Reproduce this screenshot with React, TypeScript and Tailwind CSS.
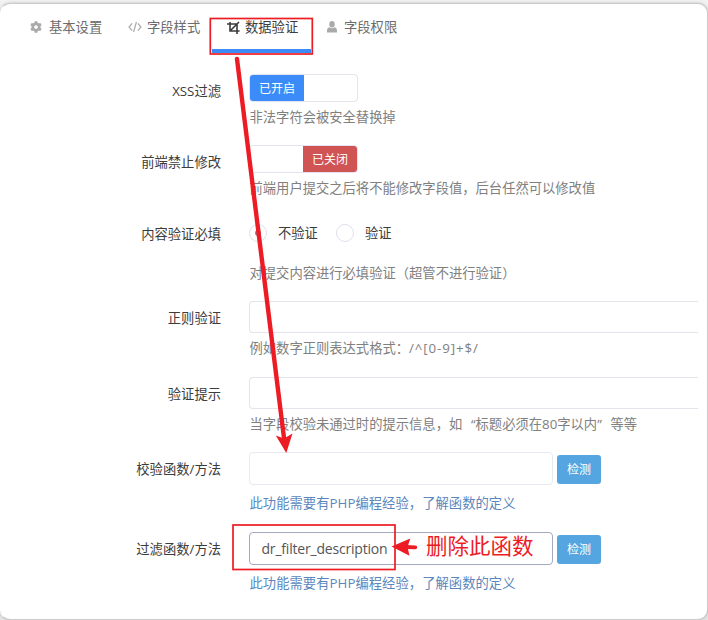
import React from 'react';
import clsx from 'clsx';
import { FaCog } from 'react-icons/fa';

const tabs = [
  { label: '基本设置', icon: <FaCog className="w-3 h-3" />, className: 'w-[98px]' },
  {
    label: '字段样式',
    className: 'w-[99px]',
    icon: (
      <svg viewBox="0 0 14 12" className="w-[14px] h-3" fill="none" stroke="currentColor" strokeWidth="1.2">
        <path d="M4.2 2.4L1 6l3.2 3.6M9.8 2.4L13 6 9.8 9.6M8.4 1L5.6 11" />
      </svg>
    ),
  },
  {
    label: '数据验证',
    className: 'w-[99px]',
    icon: (
      <svg viewBox="0 0 13 13" className="w-[13px] h-[13px]" fill="none" stroke="currentColor" strokeWidth="1.6">
        <path d="M3 1v9h9.6M0 3h10v10M3.5 9.5L12 1" />
      </svg>
    ),
  },
  {
    label: '字段权限',
    className: 'w-[80px]',
    icon: (
      <svg viewBox="0 0 10 12" className="w-[10px] h-3" fill="currentColor">
        <ellipse cx="5" cy="3.2" rx="2.7" ry="3.2" />
        <path d="M2.6 6.2C3.9 7.6 6.1 7.6 7.4 6.2C9.3 6.6 10 8 10 9.8V11.5H0V9.8C0 8 .7 6.6 2.6 6.2z" />
      </svg>
    ),
  },
];

interface RowProps {
  label: string;
  className: string;
  labelClass?: string;
  children: React.ReactNode;
}

const Row: React.FC<RowProps> = ({ label, className, labelClass = 'h-[34px]', children }) => (
  <div className={clsx('flex', className)}>
    <div className={clsx('w-[221px] mr-7 shrink-0 flex items-center justify-end text-[#3c3c3c] whitespace-nowrap', labelClass)}>
      {label}
    </div>
    <div className="flex-1 min-w-0">{children}</div>
  </div>
);

const Help = ({ children, className = 'mt-[5px] text-[#808080]' }: { children: React.ReactNode; className?: string }) => (
  <div className={clsx('h-5 leading-5 pl-[0.5px] whitespace-nowrap', className)}>{children}</div>
);

const Toggle = ({ on }: { on: boolean }) => (
  <div className="flex w-[109px] h-[28px] rounded border border-[#e3e4ee] overflow-hidden text-xs text-white">
    {on && <span className="w-[54px] pt-px flex items-center justify-center bg-[#3b8cf8]">已开启</span>}
    {!on && <span className="w-[54px] pt-px ml-auto flex items-center justify-center bg-[#d05454]">已关闭</span>}
  </div>
);

const Radio = ({ label, checked }: { label: string; checked?: boolean }) => (
  <label className="flex items-center gap-[11px] text-[#3c3c3c]">
    <span className="w-[18px] h-[18px] rounded-full border border-[#e1e0ee] flex items-center justify-center">
      {checked && <span className="w-[6px] h-[6px] rounded-full bg-[#8a86a0]" />}
    </span>
    {label}
  </label>
);

const CheckedInput = ({ value, className = 'border-[#e9eaf1]' }: { value?: string; className?: string }) => (
  <>
    <div className="flex items-start gap-1">
      <div className={clsx('w-[304px] h-[33px] rounded border px-[11.5px] flex items-center text-[14px] tracking-[-0.2px] text-[#555]', className)}>
        {value}
      </div>
      <button className="w-11 h-[29px] mt-[3px] pt-px rounded-[3px] bg-[#55a5e0] text-white text-xs">检测</button>
    </div>
    <Help className="mt-2 text-[#5a87bd] tracking-[0.04px]">此功能需要有PHP编程经验，了解函数的定义</Help>
  </>
);

const App: React.FC = () => {
  return (
    <div className="w-[708px] h-[620px] pt-[3px] bg-gradient-to-b from-[#f2f2f2] to-[#e4e4e4] overflow-hidden">
      <div className="relative w-[708px] h-[617px] bg-white border border-[#ccc] border-l-transparent rounded-[10px] shadow-[0_0_3px_#bbb] font-['Open_Sans','Noto_Sans_CJK_SC',sans-serif] text-[13.3px] leading-5">

        {/* Tabs */}
        <nav className="flex h-[49px] pl-[29px] text-[#6c6c6c]">
          {tabs.map((tab, i) => (
            <div
              key={tab.label}
              className={clsx(
                'flex items-start pt-[13px] whitespace-nowrap',
                tab.className,
                i === 2 ? 'ml-[-15px] mr-4 pl-[15px] border-b-4 border-[#3b8cf8] text-[#3c3c3c]' : ''
              )}
            >
              <span className={clsx('h-5 flex items-center', i !== 2 && 'text-[#aaa]', i === 0 || i === 3 ? 'mr-[7px]' : 'mr-[5px]')}>
                {tab.icon}
              </span>
              {tab.label}
            </div>
          ))}
        </nav>

        {/* Form rows */}
        <form className="pt-[21px] pr-[9px] overflow-hidden -ml-px">
          <Row label="XSS过滤" className="h-[71px]">
            <Toggle on />
            <Help>非法字符会被安全替换掉</Help>
          </Row>

          <Row label="前端禁止修改" className="h-[79px]">
            <Toggle on={false} />
            <Help>前端用户提交之后将不能修改字段值，后台任然可以修改值</Help>
          </Row>

          <Row label="内容验证必填" className="h-[77px]" labelClass="h-[19px]">
            <div className="flex gap-[18px] h-[18px] items-center">
              <Radio label="不验证" checked />
              <Radio label="验证" />
            </div>
            <Help className="mt-[21px] text-[#808080]">对提交内容进行必填验证（超管不进行验证）</Help>
          </Row>

          <Row label="正则验证" className="h-[76px]">
            <div className="h-8 border border-r-0 border-[#e3e4ec] rounded-l" />
            <Help>
              例如数字正则表达式格式：<span className="tracking-[0.9px]">/^[0-9]+$/</span>
            </Help>
          </Row>

          <Row label="验证提示" className="h-[75px]">
            <div className="h-8 border border-r-0 border-[#e3e4ec] rounded-l" />
            <Help>
              当字段校验未通过时的提示信息，如
              <span className="inline-block w-[13.3px] text-right">“</span>标题必须在80字以内
              <span className="inline-block w-[13.3px]">”</span>等等
            </Help>
          </Row>

          <Row label="校验函数/方法" className="h-20">
            <CheckedInput />
          </Row>

          <Row label="过滤函数/方法" className="h-[62px]">
            <CheckedInput value="dr_filter_description" className="border-[#a4a8c0]" />
          </Row>
        </form>

        {/* Red markup over the form */}
        <svg className="absolute -top-1 -left-px pointer-events-none" width="708" height="620" viewBox="0 0 708 620" fill="none">
          <g stroke="#ed1c24" strokeWidth="1.7">
            <rect x="210.3" y="18.5" width="102" height="35.5" />
            <rect x="233" y="525" width="162" height="44.5" />
          </g>
          <g stroke="#ed1c24" strokeWidth="4.4" strokeLinecap="round">
            <path d="M237 59L284 438" />
            <path d="M406 547L415.3 547.3" strokeWidth="3.8" />
          </g>
          <g fill="#ed1c24">
            <path d="M286.3 453L275.8 435.4L284 438.5L292.5 433.4Z" />
            <path d="M391.5 546.5L410.3 538.6L407.5 547L409.5 555.7Z" />
          </g>
        </svg>
        <div className="absolute left-[425px] top-[527px] text-[21.5px] leading-[30px] whitespace-nowrap text-[#ed1c24]">删除此函数</div>
      </div>
    </div>
  );
};

export default App;
